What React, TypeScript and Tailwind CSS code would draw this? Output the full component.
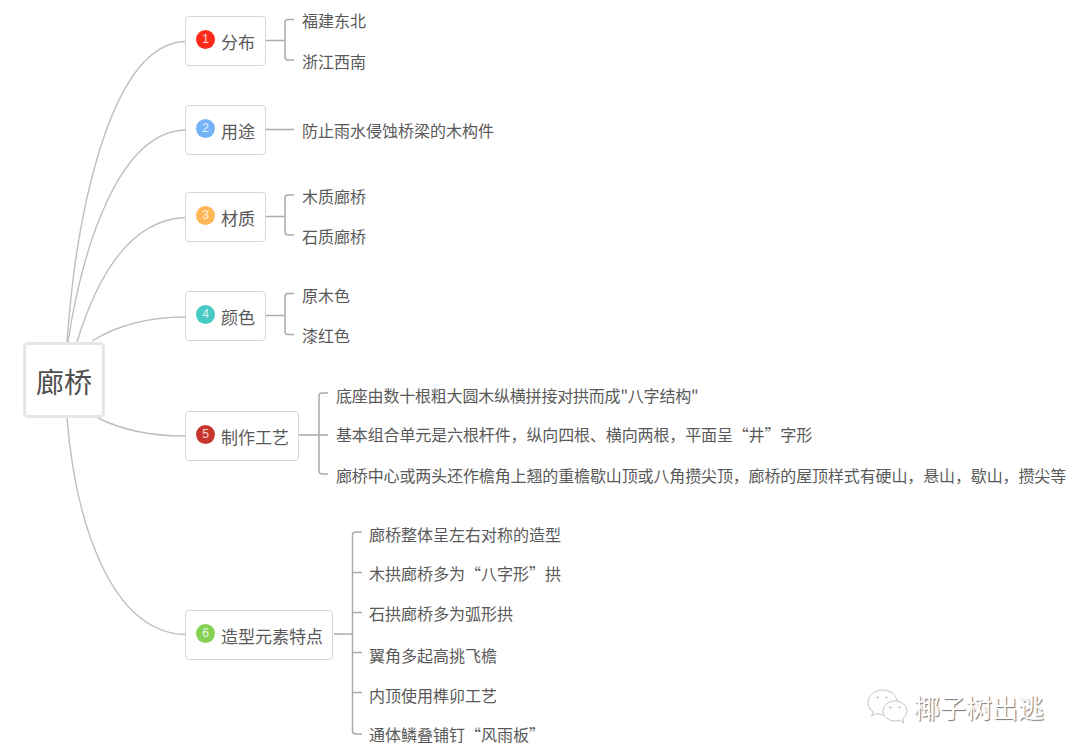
const FONT = "font-['Noto_Sans_CJK_SC','Noto_Sans',sans-serif]";

const curves = [
  "M67 342C76 215 110 44 185 41.5",
  "M68 342C82 250 118 132 185 130",
  "M77 342C96 280 128 220 185 217.5",
  "M92 341C118 325 150 317 185 317",
  "M98 418C122 430 150 436 185 436",
  "M67 417C75 520 110 632 185 634.5",
];

const brackets = [
  "M266 40.5H285M294 19.5H288Q285 19.5 285 22.5V57Q285 60 288 60H294",
  "M266 129.5H294",
  "M266 216.5H285M294 195H288Q285 195 285 198V232Q285 235 288 235H294",
  "M266 315.5H285M294 293.5H288Q285 293.5 285 296.5V331.5Q285 334.5 288 334.5H294",
  "M299 435H328M328 393H322Q319 393 319 396V471Q319 474 322 474H328",
  "M334 634H352M362 532H355.5Q352.5 532 352.5 535V731Q352.5 734 355.5 734H362M352.5 572.5H362M352.5 612.5H362M352.5 652.5H362M352.5 692.5H362",
];

const Topic = ({
  box,
  badge,
  num,
  label,
}: {
  box: string;
  badge: string;
  num: number;
  label: string;
}) => (
  <div
    className={`absolute left-[185px] flex h-[50px] items-center rounded-[4px] border border-[#d6d6d6] bg-white pl-[10px] ${box}`}
  >
    <span
      className={`mb-1 flex h-[19px] w-[19px] items-center justify-center rounded-full font-['Liberation_Sans',sans-serif] text-[12px] leading-none text-white/80 ${badge}`}
    >
      {num}
    </span>
    <span className="ml-[6px] whitespace-nowrap text-[17px] leading-none text-[#595959]">
      {label}
    </span>
  </div>
);

const Leaf = ({ pos, text }: { pos: string; text: string }) => (
  <div
    className={`absolute h-[22px] whitespace-nowrap text-[16px] leading-[22px] text-[#595959] ${pos}`}
  >
    {text}
  </div>
);

export default function App() {
  return (
    <div className={`relative h-[755px] w-[1080px] overflow-hidden bg-white ${FONT}`}>
      {/* connectors */}
      <svg className="absolute left-0 top-0" width="1080" height="755" fill="none">
        {curves.map((d) => (
          <path key={d} d={d} stroke="#bfbfbf" strokeWidth="1.4" />
        ))}
        {brackets.map((d) => (
          <path key={d} d={d} stroke="#ababab" strokeWidth="1.5" />
        ))}
      </svg>

      <div className="absolute left-[23px] top-[342px] flex h-[76px] w-[82px] items-center justify-center rounded-[5px] border-[3px] border-[#e6e6e6] bg-white pt-[1px] text-[28px] leading-none text-[#4f4f4f]">
        廊桥
      </div>

      <Topic box="top-[16px] w-[81px]" badge="bg-[#ff2a1c]" num={1} label="分布" />
      <Topic box="top-[105px] w-[81px]" badge="bg-[#74b3f7]" num={2} label="用途" />
      <Topic box="top-[192px] w-[81px]" badge="bg-[#ffb657]" num={3} label="材质" />
      <Topic box="top-[291px] w-[81px]" badge="bg-[#47c9c5]" num={4} label="颜色" />
      <Topic box="top-[411px] w-[114px]" badge="bg-[#c8352f]" num={5} label="制作工艺" />
      <Topic box="top-[610px] w-[148px]" badge="bg-[#84d154]" num={6} label="造型元素特点" />

      <Leaf pos="left-[302px] top-[9px]" text="福建东北" />
      <Leaf pos="left-[302px] top-[50px]" text="浙江西南" />
      <Leaf pos="left-[302px] top-[119px]" text="防止雨水侵蚀桥梁的木构件" />
      <Leaf pos="left-[302px] top-[185px]" text="木质廊桥" />
      <Leaf pos="left-[302px] top-[225px]" text="石质廊桥" />
      <Leaf pos="left-[302px] top-[284px]" text="原木色" />
      <Leaf pos="left-[302px] top-[324px]" text="漆红色" />
      <Leaf pos="left-[336px] top-[384px] tracking-[-0.2px]" text={'底座由数十根粗大圆木纵横拼接对拱而成"八字结构"'} />
      <Leaf pos="left-[336px] top-[423px] tracking-[-0.13px]" text="基本组合单元是六根杆件，纵向四根、横向两根，平面呈“井”字形" />
      <Leaf pos="left-[336px] top-[464px] tracking-[-0.13px]" text="廊桥中心或两头还作檐角上翘的重檐歇山顶或八角攒尖顶，廊桥的屋顶样式有硬山，悬山，歇山，攒尖等" />
      <Leaf pos="left-[369px] top-[523px]" text="廊桥整体呈左右对称的造型" />
      <Leaf pos="left-[369px] top-[562px]" text="木拱廊桥多为“八字形”拱" />
      <Leaf pos="left-[369px] top-[602px]" text="石拱廊桥多为弧形拱" />
      <Leaf pos="left-[369px] top-[644px]" text="翼角多起高挑飞檐" />
      <Leaf pos="left-[369px] top-[684px]" text="内顶使用榫卯工艺" />
      <Leaf pos="left-[369px] top-[723px]" text="通体鳞叠铺钉“风雨板”" />

      {/* watermark */}
      <div className="absolute left-[866px] top-[688px] flex items-center gap-[6px]">
        <svg width="42" height="38" viewBox="0 0 42 38" fill="#fff" stroke="#c4c4c4" strokeWidth="1">
          <path d="M17 2C8.5 2 2 7.5 2 14.5C2 18.5 4 21.5 7 24L5.5 28L10.5 25.5C12.5 26.3 14.5 26.7 17 26.8C24 27 31 22 31 14.5C31 7.5 25 2 17 2Z" />
          <path d="M29 13C22.5 13 17 17.5 17 23C17 28.5 22.5 33 29 33C30.5 33 32 32.7 33.5 32.2L38 35L36.8 30.5C39.5 28.5 41 26 41 23C41 17.5 35.5 13 29 13Z" />
          <circle cx="11.5" cy="9.5" r="1.1" fill="#bbb" stroke="none" />
          <circle cx="20.5" cy="9.5" r="1.1" fill="#bbb" stroke="none" />
          <circle cx="24.5" cy="19.5" r="1.1" fill="#bbb" stroke="none" />
          <circle cx="33.5" cy="19.5" r="1.1" fill="#bbb" stroke="none" />
        </svg>
        <span className="whitespace-nowrap text-[26px] leading-none text-white [text-shadow:1px_1px_1px_#777]">
          椰子树出逃
        </span>
      </div>
    </div>
  );
}
